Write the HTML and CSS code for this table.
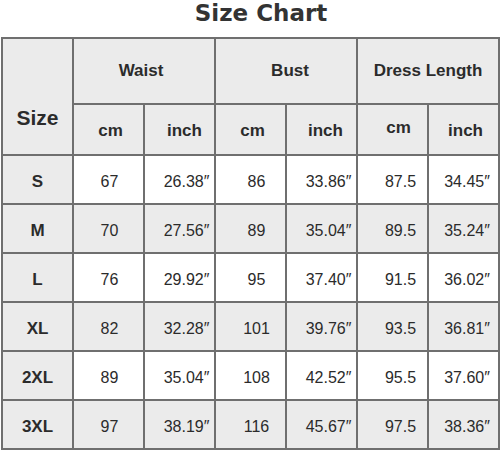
FILE: index.html
```html
<!DOCTYPE html>
<html>
<head>
<meta charset="utf-8">
<link rel="stylesheet" href="styles.css">
</head>
<body>
<h1 class="title">Size Chart</h1>
<table class="chart">
  <colgroup>
    <col class="c"><col class="c"><col class="c"><col class="c"><col class="c"><col class="c"><col class="c">
  </colgroup>
  <tr class="h1">
    <th class="size-head" rowspan="2">Size</th>
    <th colspan="2" class="g-waist">Waist</th>
    <th colspan="2" class="g-bust">Bust</th>
    <th colspan="2">Dress Length</th>
  </tr>
  <tr class="h2">
    <th class="wc">cm</th><th class="wi">inch</th>
    <th class="bc">cm</th><th class="bi">inch</th>
    <th class="dc">cm</th><th class="di">inch</th>
  </tr>
  <tr class="row white">
    <th>S</th><td class="wc">67</td><td class="wi">26.38″</td><td class="bc">86</td><td class="bi">33.86″</td><td class="dc">87.5</td><td class="di">34.45″</td>
  </tr>
  <tr class="row gray">
    <th>M</th><td class="wc">70</td><td class="wi">27.56″</td><td class="bc">89</td><td class="bi">35.04″</td><td class="dc">89.5</td><td class="di">35.24″</td>
  </tr>
  <tr class="row white">
    <th>L</th><td class="wc">76</td><td class="wi">29.92″</td><td class="bc">95</td><td class="bi">37.40″</td><td class="dc">91.5</td><td class="di">36.02″</td>
  </tr>
  <tr class="row gray">
    <th>XL</th><td class="wc">82</td><td class="wi">32.28″</td><td class="bc">101</td><td class="bi">39.76″</td><td class="dc">93.5</td><td class="di">36.81″</td>
  </tr>
  <tr class="row white">
    <th>2XL</th><td class="wc">89</td><td class="wi">35.04″</td><td class="bc">108</td><td class="bi">42.52″</td><td class="dc">95.5</td><td class="di">37.60″</td>
  </tr>
  <tr class="row gray">
    <th>3XL</th><td class="wc">97</td><td class="wi">38.19″</td><td class="bc">116</td><td class="bi">45.67″</td><td class="dc">97.5</td><td class="di">38.36″</td>
  </tr>
</table>
</body>
</html>
```
FILE: styles.css
```css
html, body {
  margin: 0;
  padding: 0;
  background: #ffffff;
}

.title {
  margin: 0;
  height: 37px;
  line-height: 27px;
  padding-left: 22px;
  text-align: center;
  font-family: "DejaVu Sans", sans-serif;
  font-weight: 700;
  font-size: 23px;
  color: #333333;
  box-sizing: border-box;
}

.chart {
  border-collapse: collapse;
  table-layout: fixed;
  width: 497px;
  margin-left: 1px;
  font-family: "Liberation Sans", Arial, sans-serif;
  color: #2b2b2b;
}

.chart col.c {
  width: 71px;
}

.chart th,
.chart td {
  border: 2px solid #6f6f6f;
  padding: 0;
  text-align: center;
  vertical-align: middle;
  box-sizing: border-box;
}

.chart th {
  background: #ebebeb;
  font-weight: 700;
}

.h1 th {
  height: 66px;
  font-size: 17px;
}

.h1 .size-head {
  font-size: 21px;
  padding-top: 42px;
}

.h1 .g-waist { padding-right: 6px; }
.h1 .g-bust { padding-left: 8px; }

.h2 th {
  height: 51px;
  font-size: 17px;
  padding-top: 3px;
}

.row th,
.row td {
  height: 49px;
  padding-top: 4px;
}

.row th {
  font-size: 17px;
}

.row td {
  font-size: 16px;
  font-weight: 400;
}

.white td { background: #ffffff; }
.gray td { background: #ebebeb; }

.h2 .wc { padding-left: 4px; }
.h2 .wi { padding-left: 10px; }
.h2 .bc { padding-left: 4px; }
.h2 .bi { padding-left: 8px; }
.h2 .dc { padding-left: 12px; padding-top: 0; padding-bottom: 4px; }
.h2 .di { padding-left: 4px; }

.row .wc { padding-left: 2px; }
.row .wi { padding-left: 14px; }
.row .bc { padding-left: 12px; }
.row .bi { padding-left: 14px; }
.row .dc { padding-left: 16px; }
.row .di { padding-left: 7px; }
```
